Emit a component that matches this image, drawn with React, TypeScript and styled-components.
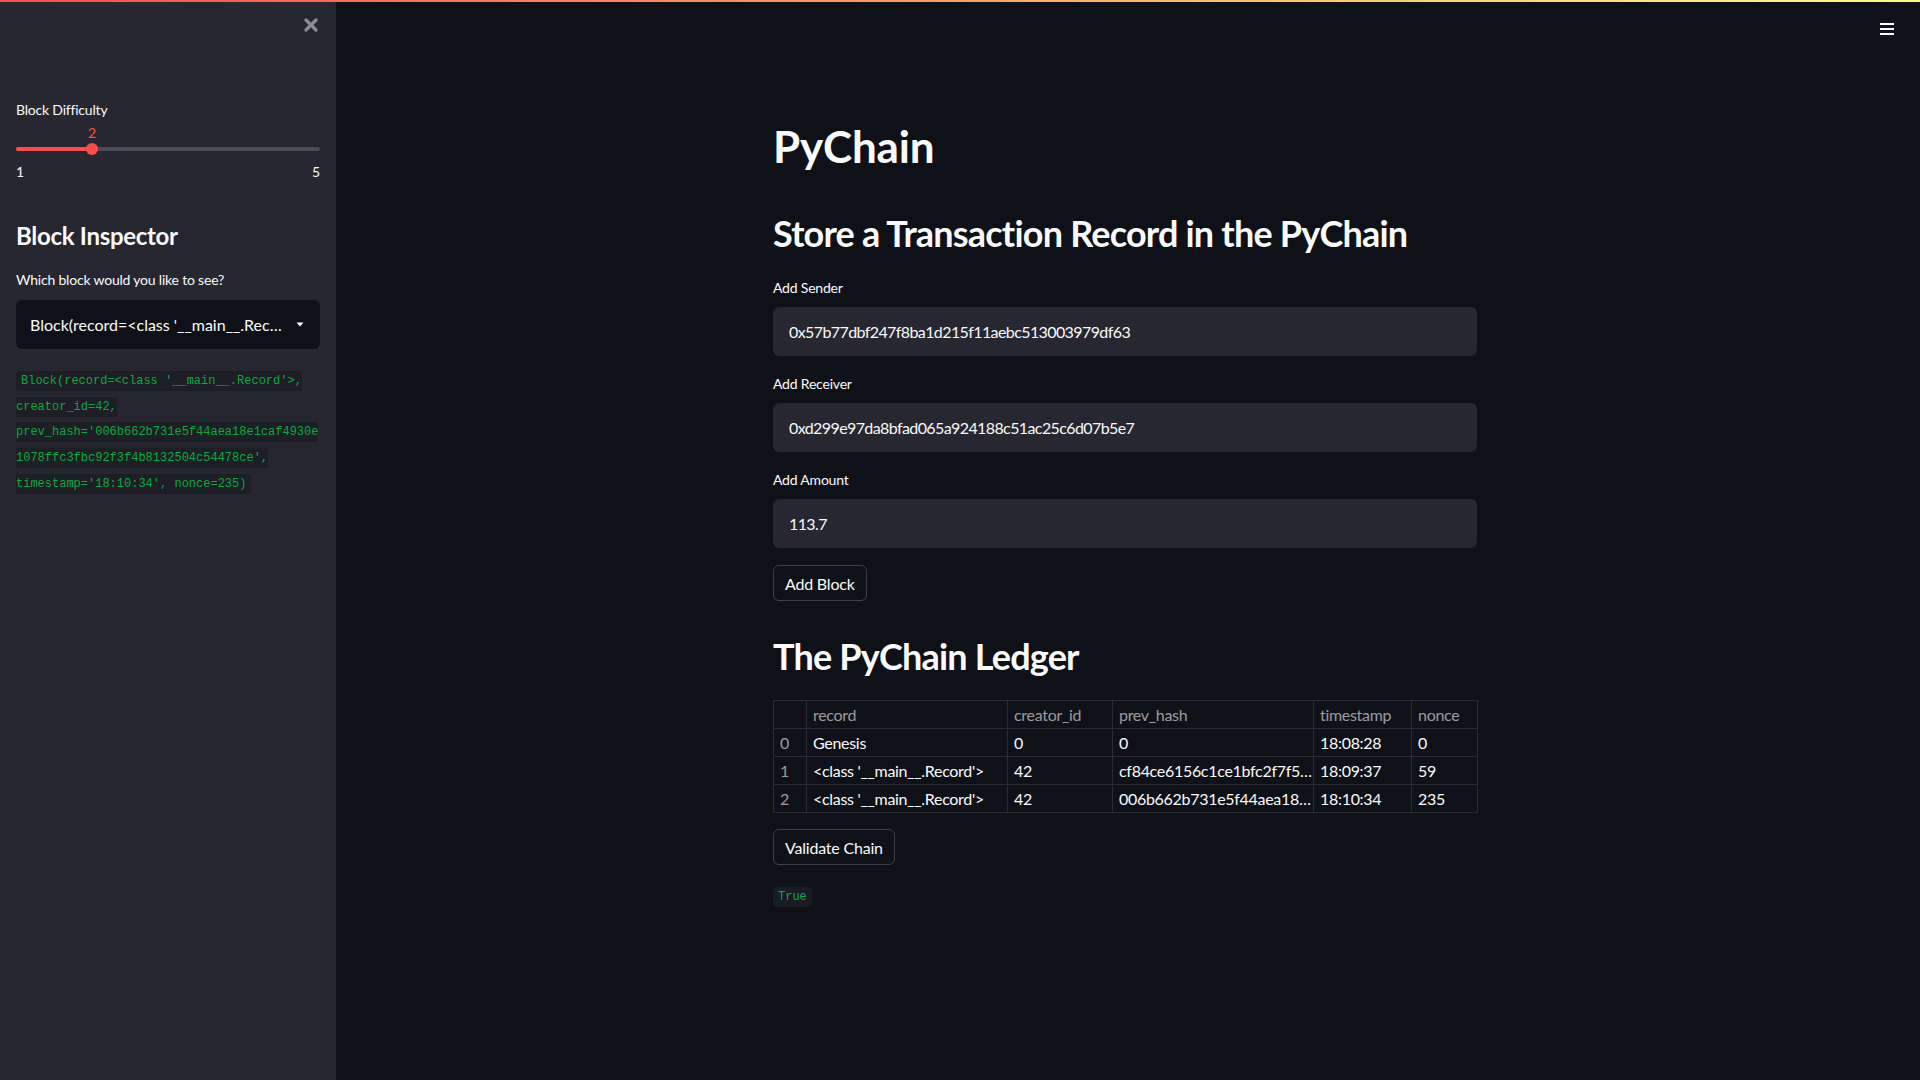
import React from 'react';
import styled, { createGlobalStyle } from 'styled-components';

const GlobalStyle = createGlobalStyle`
  html, body {
    margin: 0;
    padding: 0;
    background: #0e1117;
  }
  body {
    font-family: Lato, "Noto Sans", sans-serif;
    color: #fafafa;
    -webkit-font-smoothing: antialiased;
  }
  * {
    box-sizing: border-box;
  }
`;

const LEDGER = [
  { id: 0, record: 'Genesis', creator: '0', prevHash: '0', time: '18:08:28', nonce: '0' },
  { id: 1, record: "<class '__main__.Record'>", creator: '42', prevHash: 'cf84ce6156c1ce1bfc2f7f5…', time: '18:09:37', nonce: '59' },
  { id: 2, record: "<class '__main__.Record'>", creator: '42', prevHash: '006b662b731e5f44aea18…', time: '18:10:34', nonce: '235' },
];

const COLUMNS = [
  { key: 'index', title: '', width: 33 },
  { key: 'record', title: 'record', width: 201 },
  { key: 'creator', title: 'creator_id', width: 105 },
  { key: 'prevHash', title: 'prev_hash', width: 201 },
  { key: 'time', title: 'timestamp', width: 98 },
  { key: 'nonce', title: 'nonce', width: 66 },
];

const BLOCK_TEXT =
  "Block(record=<class '__main__.Record'>, creator_id=42, prev_hash='006b662b731e5f44aea18e1caf4930e1078ffc3fbc92f3f4b8132504c54478ce', timestamp='18:10:34', nonce=235)";

function App() {
  const difficulty = 2;
  const pct = ((difficulty - 1) / (5 - 1)) * 100;

  return (
    <>
      <GlobalStyle />
      <Shell>
        <Decoration />
        <Sidebar>
          <SidebarTop>
            <svg width="14" height="14" viewBox="0 0 14 14">
              <path d="M2 2 L12 12 M12 2 L2 12" stroke="#8b8d93" strokeWidth="3.2" strokeLinecap="round" />
            </svg>
          </SidebarTop>

          <WidgetLabel $top={68}>Block Difficulty</WidgetLabel>
          <SliderBox>
            <SliderValue style={{ left: `${pct}%` }}>{difficulty}</SliderValue>
            <SliderTrack>
              <SliderFill style={{ width: `${pct}%` }} />
              <SliderThumb style={{ left: `${pct}%` }} />
            </SliderTrack>
          </SliderBox>
          <TickRow>
            <span>1</span>
            <span>5</span>
          </TickRow>

          <SideHeading>Block Inspector</SideHeading>
          <WidgetLabel $top={20}>Which block would you like to see?</WidgetLabel>
          <SelectBox>
            <SelectText>Block(record=&lt;class '__main__.Rec…</SelectText>
            <svg width="8" height="5" viewBox="0 0 8 5">
              <path d="M0.5 0.5 L7.5 0.5 L4 4.5 Z" fill="#fafafa" />
            </svg>
          </SelectBox>

          <CodeParagraph>
            <InlineCode $dim>{BLOCK_TEXT}</InlineCode>
          </CodeParagraph>
        </Sidebar>

        <Main>
          <MenuButton>
            <svg width="14" height="12" viewBox="0 0 14 12">
              <rect x="0" y="0" width="14" height="2" fill="#fafafa" />
              <rect x="0" y="5" width="14" height="2" fill="#fafafa" />
              <rect x="0" y="10" width="14" height="2" fill="#fafafa" />
            </svg>
          </MenuButton>

          <BlockContainer>
            <Title>PyChain</Title>
            <Heading $top={40}>Store a Transaction Record in the PyChain</Heading>

            <Field $top={23}>
              <WidgetLabel>Add Sender</WidgetLabel>
              <TextInput readOnly value="0x57b77dbf247f8ba1d215f11aebc513003979df63" />
            </Field>
            <Field $top={18}>
              <WidgetLabel>Add Receiver</WidgetLabel>
              <TextInput readOnly value="0xd299e97da8bfad065a924188c51ac25c6d07b5e7" />
            </Field>
            <Field $top={18}>
              <WidgetLabel>Add Amount</WidgetLabel>
              <TextInput readOnly value="113.7" />
            </Field>

            <ActionButton $top={17}>Add Block</ActionButton>

            <Heading $top={34}>The PyChain Ledger</Heading>

            <Ledger>
              <colgroup>
                {COLUMNS.map(col => (
                  <col key={col.key} style={{ width: col.width }} />
                ))}
              </colgroup>
              <thead>
                <tr>
                  {COLUMNS.map(col => (
                    <HeadCell key={col.key}>{col.title}</HeadCell>
                  ))}
                </tr>
              </thead>
              <tbody>
                {LEDGER.map(row => (
                  <tr key={row.id}>
                    <IndexCell>{row.id}</IndexCell>
                    <Cell>{row.record}</Cell>
                    <Cell>{row.creator}</Cell>
                    <Cell>{row.prevHash}</Cell>
                    <Cell>{row.time}</Cell>
                    <Cell>{row.nonce}</Cell>
                  </tr>
                ))}
              </tbody>
            </Ledger>

            <ActionButton $top={16}>Validate Chain</ActionButton>

            <ResultLine>
              <InlineCode>True</InlineCode>
            </ResultLine>
          </BlockContainer>
        </Main>
      </Shell>
    </>
  );
}

const Shell = styled.div`
  position: relative;
  display: flex;
  height: 100vh;
  overflow: hidden;
`;

const Decoration = styled.div`
  position: absolute;
  top: 0;
  left: 0;
  right: 0;
  height: 2px;
  background: linear-gradient(90deg, #ff4b4b, #fffd80);
  z-index: 5;
`;

const Sidebar = styled.aside`
  width: 336px;
  flex-shrink: 0;
  height: 100%;
  background: #262730;
  padding: 18px 16px 0;
  display: flex;
  flex-direction: column;
`;

const SidebarTop = styled.div`
  display: flex;
  justify-content: flex-end;
  height: 14px;
  padding-right: 2px;
`;

const WidgetLabel = styled.div<{ $top?: number }>`
  margin-top: ${p => p.$top ?? 0}px;
  font-size: 14px;
  line-height: 20px;
  letter-spacing: -0.2px;
  color: #fafafa;
`;

const SliderBox = styled.div`
  position: relative;
  margin-top: 5px;
  padding-top: 22px;
`;

const SliderValue = styled.div`
  position: absolute;
  top: 0;
  transform: translateX(-50%);
  font-size: 14px;
  line-height: 16px;
  color: #ff4b4b;
`;

const SliderTrack = styled.div`
  position: relative;
  height: 4px;
  border-radius: 2px;
  background: #4b4c55;
`;

const SliderFill = styled.div`
  height: 100%;
  border-radius: 2px;
  background: #ff4b4b;
`;

const SliderThumb = styled.div`
  position: absolute;
  top: 50%;
  width: 12px;
  height: 12px;
  border-radius: 50%;
  background: #ff4b4b;
  transform: translate(-50%, -50%);
`;

const TickRow = styled.div`
  display: flex;
  justify-content: space-between;
  margin-top: 13px;
  font-size: 14px;
  line-height: 16px;
`;

const SideHeading = styled.h2`
  margin: 41px 0 0;
  font-size: 24px;
  line-height: 29px;
  font-weight: 700;
  letter-spacing: -0.3px;
`;

const SelectBox = styled.div`
  display: flex;
  align-items: center;
  gap: 12px;
  height: 49px;
  margin-top: 10px;
  padding: 0 16px 0 14px;
  border-radius: 6px;
  background: #0e1117;
`;

const SelectText = styled.span`
  flex: 1;
  font-size: 16px;
  white-space: nowrap;
  overflow: hidden;
`;

const CodeParagraph = styled.p`
  margin: 20px 0 0;
  font-family: "Liberation Mono", "DejaVu Sans Mono", monospace;
  font-size: 12px;
  line-height: 25.7px;
  overflow-wrap: break-word;
`;

const InlineCode = styled.code<{ $dim?: boolean }>`
  font-family: "Liberation Mono", "DejaVu Sans Mono", monospace;
  font-size: 12px;
  padding: 3px 5px;
  border-radius: 4px;
  color: #09ab3b;
  background: ${p => (p.$dim ? '#1d1e26' : '#1a1c24')};
`;

const Main = styled.main`
  position: relative;
  flex: 1;
  display: flex;
  justify-content: center;
  padding-right: 6px;
  overflow: hidden;
`;

const MenuButton = styled.div`
  position: absolute;
  top: 23px;
  right: 26px;
  display: flex;
`;

const BlockContainer = styled.div`
  width: 736px;
  padding: 120px 16px 0;
  display: flex;
  flex-direction: column;
  align-items: flex-start;
`;

const Title = styled.h1`
  margin: 0;
  font-size: 44px;
  line-height: 52px;
  font-weight: 700;
  letter-spacing: -0.2px;
`;

const Heading = styled.h2<{ $top: number }>`
  margin: ${p => p.$top}px 0 0;
  font-size: 36px;
  line-height: 43px;
  font-weight: 700;
  letter-spacing: -0.8px;
`;

const Field = styled.div<{ $top: number }>`
  display: flex;
  flex-direction: column;
  gap: 9px;
  width: 100%;
  margin-top: ${p => p.$top}px;
`;

const TextInput = styled.input`
  width: 100%;
  height: 49px;
  padding: 0 16px;
  border: none;
  border-radius: 6px;
  outline: none;
  background: #262730;
  color: #fafafa;
  font-family: inherit;
  font-size: 16px;
  letter-spacing: -0.6px;
`;

const ActionButton = styled.button<{ $top: number }>`
  margin-top: ${p => p.$top}px;
  height: 36px;
  padding: 0 11px;
  border: 1px solid rgba(250, 250, 250, 0.2);
  border-radius: 6px;
  background: transparent;
  color: #fafafa;
  font-family: inherit;
  font-size: 16px;
  letter-spacing: -0.2px;
`;

const Ledger = styled.table`
  width: 100%;
  margin-top: 22px;
  border-collapse: collapse;
  table-layout: fixed;
  font-size: 16px;
  letter-spacing: -0.3px;
`;

const HeadCell = styled.th`
  height: 28px;
  padding: 0 6px;
  border: 1px solid #2a2c32;
  text-align: left;
  font-weight: 400;
  color: rgba(250, 250, 250, 0.6);
  white-space: nowrap;
  overflow: hidden;
`;

const Cell = styled.td`
  height: 28px;
  padding: 0 6px;
  border: 1px solid #2a2c32;
  color: #fafafa;
  white-space: nowrap;
  overflow: hidden;
`;

const IndexCell = styled(Cell)`
  color: rgba(250, 250, 250, 0.6);
`;

const ResultLine = styled.div`
  margin-top: 20px;
  line-height: 18px;
`;

export default App;
